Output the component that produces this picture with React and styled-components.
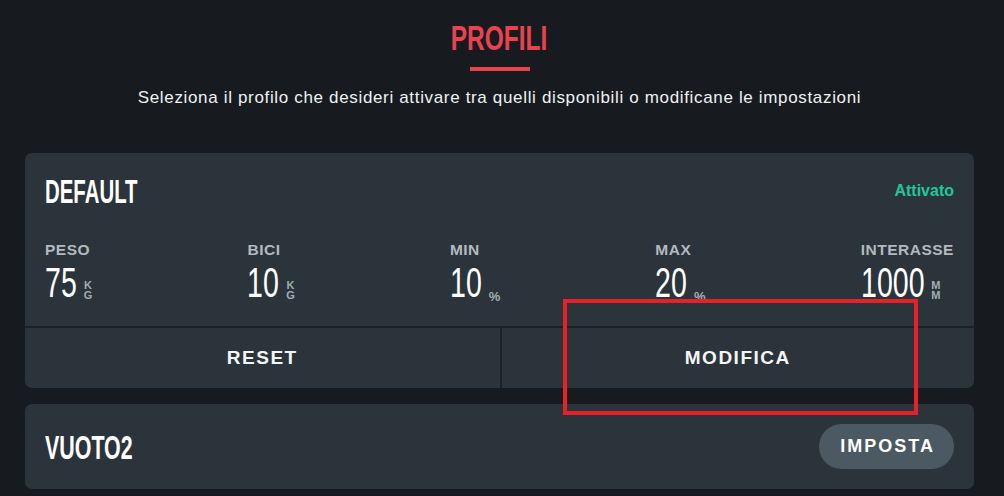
import React from 'react';
import styled, { createGlobalStyle } from 'styled-components';

const GlobalStyle = createGlobalStyle`
  html, body {
    margin: 0;
    padding: 0;
    background: #171b1f;
  }
  body {
    font-family: 'Liberation Sans', Arial, sans-serif;
    color: #fff;
  }
`;

// the app uses a very narrow DIN-like face; no such font is installed,
// so Liberation Sans gets squeezed horizontally
const Squeeze = styled.span`
  display: inline-block;
  transform: scaleX(${(p) => p.$scale});
  transform-origin: ${(p) => p.$origin || 'left center'};
  margin-right: ${(p) => p.$trim || 0}px;
`;

const Page = styled.div`
  position: relative;
  width: 1004px;
  height: 496px;
  overflow: hidden;
  padding: 20px 30px 0 25px;
  box-sizing: border-box;
  display: flex;
  flex-direction: column;
`;

const Header = styled.header`
  display: flex;
  flex-direction: column;
  align-items: center;
`;

const Title = styled.h1`
  margin: 0;
  font-weight: 700;
  font-size: 35px;
  line-height: 35px;
  color: #e8434f;
`;

const Underline = styled.div`
  width: 60px;
  height: 4px;
  background: #e8434f;
  margin-top: 12px;
`;

const Subtitle = styled.p`
  margin: 17px 0 0;
  font-size: 17px;
  line-height: 20px;
  letter-spacing: 0.66px;
  color: #eef1f2;
`;

const Card = styled.section`
  background: #2b343b;
  border-radius: 7px;
  margin-top: ${(p) => p.$top}px;
  overflow: hidden;
`;

const CardHead = styled.div`
  display: flex;
  justify-content: space-between;
  align-items: center;
  padding: ${(p) => p.$pad};
`;

const CardName = styled.h2`
  margin: 0;
  font-weight: 700;
  font-size: 34px;
  line-height: 34px;
  color: #fff;
`;

const Status = styled.span`
  font-size: 16px;
  font-weight: 700;
  color: #1ec79a;
`;

const Stats = styled.div`
  display: flex;
  justify-content: space-between;
  padding: 34px 20px 23px;
`;

const Stat = styled.div`
  display: flex;
  flex-direction: column;
`;

const Label = styled.span`
  font-size: 15.5px;
  line-height: 16px;
  font-weight: 700;
  color: #b2babf;
  letter-spacing: 0.5px;
`;

const ValueRow = styled.div`
  display: flex;
  align-items: flex-end;
  gap: 7px;
  margin-top: 5px;
`;

const Value = styled.span`
  font-size: 42px;
  line-height: 40px;
  color: #fff;
`;

const Unit = styled.span`
  display: flex;
  flex-direction: column;
  align-items: center;
  font-size: ${(p) => (p.$stacked ? 11 : 13)}px;
  line-height: 10px;
  font-weight: 700;
  color: #a3adb3;
  padding-bottom: ${(p) => (p.$stacked ? 3 : 1)}px;
`;

const Actions = styled.div`
  display: grid;
  grid-template-columns: 1fr 1fr;
  border-top: 2px solid #1b2126;
`;

const ActionButton = styled.button`
  height: 60px;
  padding: 0;
  background: transparent;
  border: none;
  border-left: ${(p) => (p.$divider ? '2px solid #1b2126' : 'none')};
  color: #f3f5f6;
  font-family: 'Liberation Sans', sans-serif;
  font-size: 19px;
  font-weight: 700;
  letter-spacing: 1.5px;
  cursor: pointer;
`;

const PillButton = styled.button`
  height: 45px;
  padding: 0 19px 0 21px;
  border: none;
  border-radius: 23px;
  background: #4b5a62;
  color: #fff;
  font-family: 'Liberation Sans', sans-serif;
  font-size: 18px;
  font-weight: 700;
  letter-spacing: 2px;
  cursor: pointer;
`;

const Highlight = styled.div`
  position: absolute;
  left: 563px;
  top: 299px;
  width: 355px;
  height: 116px;
  border: 4px solid #e8202a;
  box-sizing: border-box;
  pointer-events: none;
`;

const stats = [
  { label: 'PESO', value: '75', unit: ['K', 'G'] },
  { label: 'BICI', value: '10', unit: ['K', 'G'] },
  { label: 'MIN', value: '10', unit: ['%'] },
  { label: 'MAX', value: '20', unit: ['%'] },
  { label: 'INTERASSE', value: '1000', unit: ['M', 'M'] },
];

const VALUE_SCALE = 0.68;
// width lost by the squeeze: digit width 0.556em at 42px
const digitTrim = (text) => -text.length * 0.556 * 42 * (1 - VALUE_SCALE);

function App() {
  return (
    <Page>
      <GlobalStyle />
      <Header>
        <Title>
          <Squeeze $scale={0.7} $origin="center">PROFILI</Squeeze>
        </Title>
        <Underline />
        <Subtitle>
          Seleziona il profilo che desideri attivare tra quelli disponibili o modificane le impostazioni
        </Subtitle>
      </Header>

      <Card $top={45}>
        <CardHead $pad="21px 20px 0">
          <CardName>
            <Squeeze $scale={0.6}>DEFAULT</Squeeze>
          </CardName>
          <Status>Attivato</Status>
        </CardHead>
        <Stats>
          {stats.map((s) => (
            <Stat key={s.label}>
              <Label>{s.label}</Label>
              <ValueRow>
                <Value>
                  <Squeeze $scale={VALUE_SCALE} $trim={digitTrim(s.value)}>
                    {s.value}
                  </Squeeze>
                </Value>
                <Unit $stacked={s.unit.length > 1}>
                  {s.unit.map((u, i) => (
                    <span key={i}>{u}</span>
                  ))}
                </Unit>
              </ValueRow>
            </Stat>
          ))}
        </Stats>
        <Actions>
          <ActionButton>RESET</ActionButton>
          <ActionButton $divider>MODIFICA</ActionButton>
        </Actions>
      </Card>

      <Card $top={16}>
        <CardHead $pad="20px 20px">
          <CardName>
            <Squeeze $scale={0.63}>VUOTO2</Squeeze>
          </CardName>
          <PillButton>IMPOSTA</PillButton>
        </CardHead>
      </Card>

      <Highlight />
    </Page>
  );
}

export default App;
